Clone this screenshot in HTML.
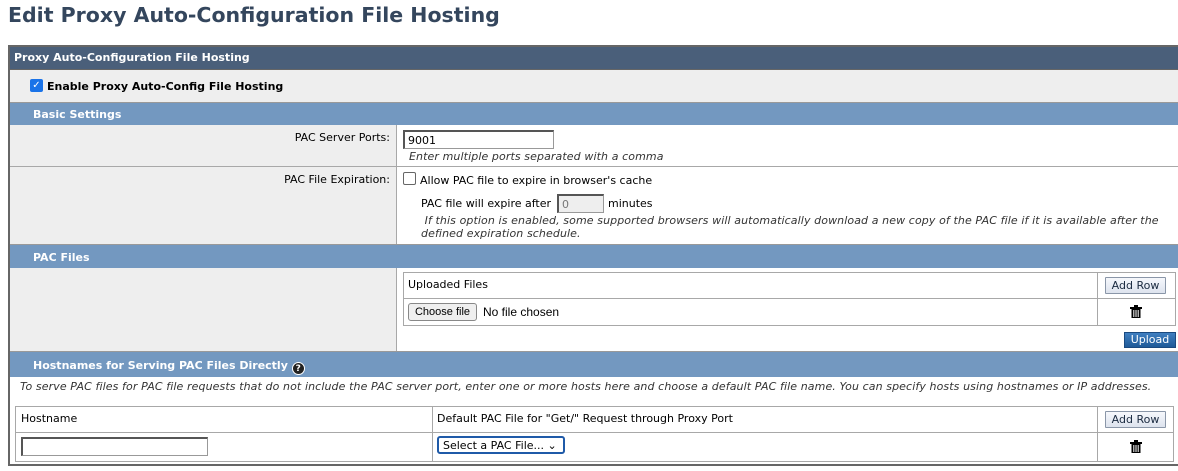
<!DOCTYPE html>
<html><head><style>
*{margin:0;padding:0;box-sizing:border-box}
body{width:1178px;height:471px;background:#fff;position:relative;overflow:hidden;font-family:"DejaVu Sans","Liberation Sans",sans-serif;font-size:11px;color:#000}
.a{position:absolute;white-space:nowrap}
.bar{position:absolute;left:10px;width:1170px;background:#7398c0;color:#fff;font-weight:bold;font-size:11px}
.gray{position:absolute;background:#eeeeee}
.hl{position:absolute;height:1px;background:#a8a8a8}
.vl{position:absolute;width:1px;background:#a8a8a8}
.btn{position:absolute;border:1px solid #8a96a8;background:linear-gradient(#f6f8fc,#dde3ee);font-size:11px;text-align:center;color:#1a2a40;border-radius:1px}
.inp{position:absolute;border:1px solid #999;border-top:2px solid #555;border-left:2px solid #555;background:#fff;font-size:11px;padding-left:3px}
.i{font-style:italic;color:#333;letter-spacing:0.1px}
</style></head><body>
<div class="a" style="left:8px;top:3px;font-size:20.5px;font-weight:bold;color:#34465d">Edit Proxy Auto-Configuration File Hosting</div>
<div class="a" style="left:8px;top:45px;width:1172px;height:421px;border:2px solid #666;border-right:none"></div>
<div class="a" style="left:10px;top:47px;width:1170px;height:22px;background:#4a5f7a;color:#fff;font-weight:bold;padding:4px 0 0 4px">Proxy Auto-Configuration File Hosting</div>
<div class="gray" style="left:10px;top:69px;width:1170px;height:33px;border-top:1px solid #666"></div>
<div class="a" style="left:30px;top:79px;width:13px;height:13px;background:#1a73e8;border-radius:2px;color:#fff;font-size:10px;line-height:13px;text-align:center">✓</div>
<div class="a" style="left:47px;top:80px;font-weight:bold">Enable Proxy Auto-Config File Hosting</div>
<div class="bar" style="top:102px;height:23px;padding:5px 0 0 23px;border-top:1px solid #999">Basic Settings</div>
<div class="gray" style="left:10px;top:125px;width:386px;height:119px"></div>
<div class="vl" style="left:396px;top:125px;height:119px"></div>
<div class="a" style="left:0;width:390px;text-align:right;top:131px">PAC Server Ports:</div>
<div class="inp" style="left:403px;top:130px;width:151px;height:19px;padding-top:2px">9001</div>
<div class="a i" style="left:409px;top:150px">Enter multiple ports separated with a comma</div>
<div class="hl" style="left:10px;top:166px;width:1170px"></div>
<div class="a" style="left:0;width:390px;text-align:right;top:173px">PAC File Expiration:</div>
<div class="a" style="left:403px;top:172px;width:13px;height:13px;border:1px solid #666;border-radius:2px;background:#fff"></div>
<div class="a" style="left:420px;top:174px">Allow PAC file to expire in browser's cache</div>
<div class="a" style="left:421px;top:197px">PAC file will expire after</div>
<div class="inp" style="left:557px;top:194px;width:47px;height:19px;background:#eee;color:#777;padding-top:2px">0</div>
<div class="a" style="left:608px;top:197px">minutes</div>
<div class="a i" style="left:421px;top:214px">&nbsp;If this option is enabled, some supported browsers will automatically download a new copy of the PAC file if it is available after the</div>
<div class="a i" style="left:421px;top:227px">defined expiration schedule.</div>
<div class="bar" style="top:244px;height:24px;padding:6px 0 0 23px;border-top:1px solid #999">PAC Files</div>
<div class="gray" style="left:10px;top:268px;width:386px;height:83px"></div>
<div class="vl" style="left:396px;top:268px;height:83px"></div>
<div class="a" style="left:403px;top:272px;width:773px;height:54px;border:1px solid #a8a8a8"></div>
<div class="hl" style="left:403px;top:298px;width:773px"></div>
<div class="vl" style="left:1097px;top:272px;height:54px"></div>
<div class="a" style="left:408px;top:278px">Uploaded Files</div>
<div class="btn" style="left:1105px;top:277px;width:61px;height:17px;line-height:15px">Add Row</div>
<div class="btn" style="left:408px;top:303px;width:69px;height:18px;line-height:16px;background:#efefef;border-color:#888;border-radius:3px;color:#000;font-family:'Liberation Sans',sans-serif">Choose file</div>
<div class="a" style="left:483px;top:305px;font-family:'Liberation Sans',sans-serif;font-size:12px">No file chosen</div>
<svg class="a" style="left:1130px;top:305px" width="12" height="13" viewBox="0 0 12 13"><rect x="4" y="0" width="4" height="2" fill="#000"/><rect x="0" y="2" width="12" height="2" fill="#000"/><rect x="1.5" y="4" width="9" height="9" fill="#000"/><rect x="3.3" y="5" width="1" height="7" fill="#fff"/><rect x="5.5" y="5" width="1" height="7" fill="#fff"/><rect x="7.7" y="5" width="1" height="7" fill="#fff"/></svg>
<div class="a" style="left:1124px;top:332px;width:52px;height:16px;background:linear-gradient(#3f7fc0,#1f5a98);border:1px solid #1a4a80;color:#fff;text-align:center;line-height:14px">Upload</div>
<div class="bar" style="top:351px;height:26px;padding:7px 0 0 23px;border-top:1px solid #999">Hostnames for Serving PAC Files Directly <span style="display:inline-block;width:13px;height:13px;border-radius:7px;background:#222;color:#fff;font-size:9px;line-height:13px;text-align:center;border:1px solid #fff;vertical-align:-2px">?</span></div>
<div class="a i" style="left:20px;top:380px">To serve PAC files for PAC file requests that do not include the PAC server port, enter one or more hosts here and choose a default PAC file name. You can specify hosts using hostnames or IP addresses.</div>
<div class="a" style="left:15px;top:406px;width:1159px;height:56px;border:1px solid #a8a8a8"></div>
<div class="hl" style="left:15px;top:432px;width:1159px"></div>
<div class="vl" style="left:432px;top:406px;height:56px"></div>
<div class="vl" style="left:1097px;top:406px;height:56px"></div>
<div class="a" style="left:21px;top:412px">Hostname</div>
<div class="a" style="left:437px;top:412px">Default PAC File for "Get/" Request through Proxy Port</div>
<div class="btn" style="left:1105px;top:411px;width:61px;height:17px;line-height:15px">Add Row</div>
<div class="inp" style="left:21px;top:437px;width:187px;height:19px"></div>
<div class="a" style="left:437px;top:436px;width:128px;height:18px;border:2px solid #1f5aa8;border-radius:3px;background:#fff;padding:1px 0 0 4px;font-size:11px">Select a PAC File... ⌄</div>
<svg class="a" style="left:1130px;top:440px" width="12" height="13" viewBox="0 0 12 13"><rect x="4" y="0" width="4" height="2" fill="#000"/><rect x="0" y="2" width="12" height="2" fill="#000"/><rect x="1.5" y="4" width="9" height="9" fill="#000"/><rect x="3.3" y="5" width="1" height="7" fill="#fff"/><rect x="5.5" y="5" width="1" height="7" fill="#fff"/><rect x="7.7" y="5" width="1" height="7" fill="#fff"/></svg>
</body></html>
